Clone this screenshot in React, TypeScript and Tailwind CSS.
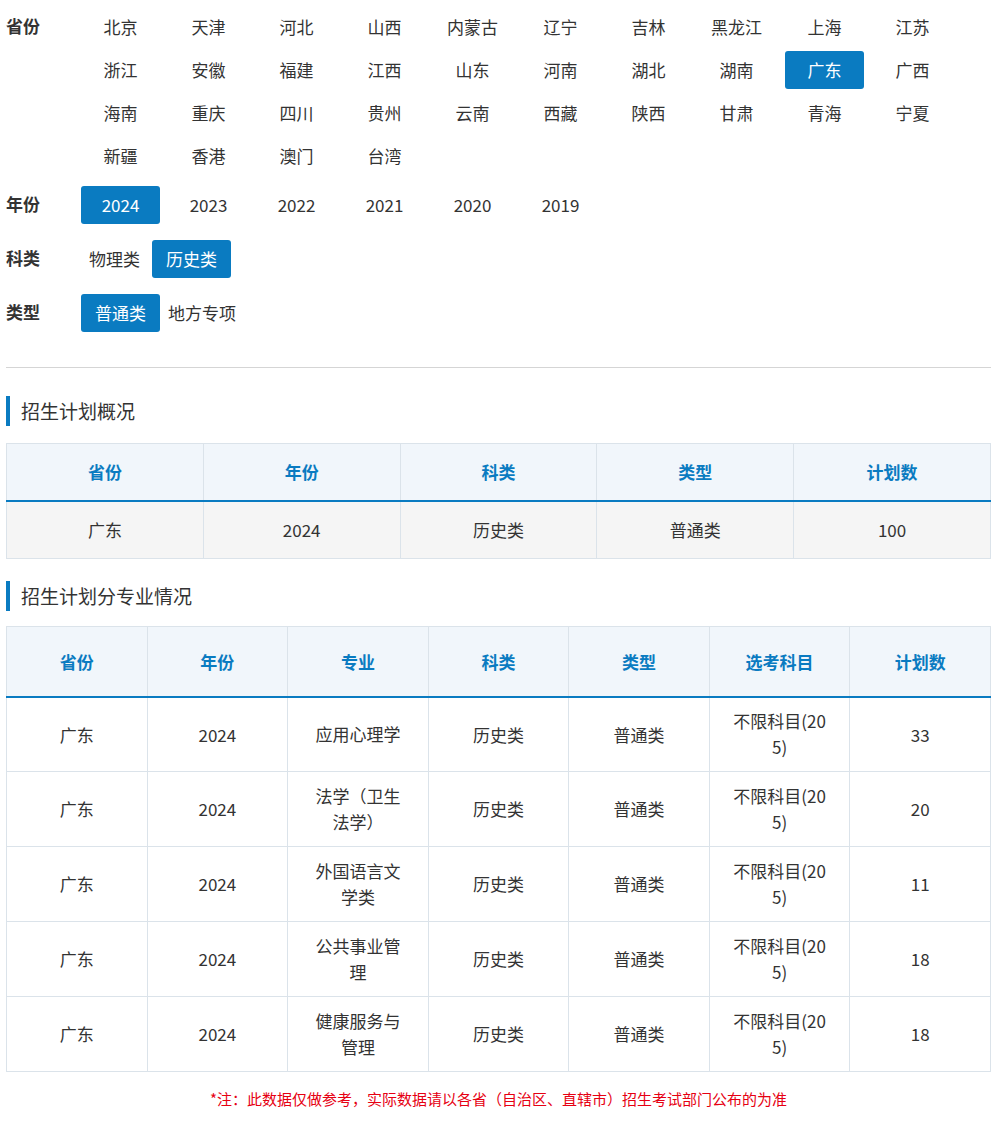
import React from "react";

const provinces = ["北京","天津","河北","山西","内蒙古","辽宁","吉林","黑龙江","上海","江苏","浙江","安徽","福建","江西","山东","河南","湖北","湖南","广东","广西","海南","重庆","四川","贵州","云南","西藏","陕西","甘肃","青海","宁夏","新疆","香港","澳门","台湾"];
const years = ["2024","2023","2022","2021","2020","2019"];
const rows = [
  ["应用心理学","33"],
  ["法学（卫生法学）","20"],
  ["外国语言文学类","11"],
  ["公共事业管理","18"],
  ["健康服务与管理","18"],
];

function Opt({ t, active }: { t: string; active?: boolean }) {
  return (
    <div className={`h-[38px] w-[79px] mr-[9px] flex items-center justify-center rounded-[3px] text-[17px] ${active ? "bg-[#0a7bc1] text-white" : "text-[#333]"}`}>{t}</div>
  );
}

function Label({ t }: { t: string }) {
  return <div className="w-[75px] shrink-0 font-bold text-[17px] text-[#333] pt-[5px]">{t}</div>;
}

function Title({ t }: { t: string }) {
  return (
    <div className="flex items-center h-[30px]">
      <div className="w-[4px] h-[30px] bg-[#0a7bc1]" />
      <div className="ml-[11px] text-[19px] text-[#333]">{t}</div>
    </div>
  );
}

export default function App() {
  return (
    <div className="w-[997px] bg-white px-[6px] pt-[8px] pb-[10px] text-[#333]" style={{ fontFamily: '"Noto Sans CJK SC", "Noto Sans", sans-serif' }}>
      <div className="flex">
        <Label t="省份" />
        <div className="flex flex-wrap w-[890px] gap-y-[5px]">
          {provinces.map((p) => <Opt key={p} t={p} active={p === "广东"} />)}
        </div>
      </div>
      <div className="flex mt-[11px]">
        <Label t="年份" />
        <div className="flex">{years.map((y) => <Opt key={y} t={y} active={y === "2024"} />)}</div>
      </div>
      <div className="flex mt-[16px]">
        <Label t="科类" />
        <div className="flex gap-[4px]">
          <div className="h-[38px] px-[8px] flex items-center text-[17px] text-[#333]">物理类</div>
          <div className="h-[38px] w-[79px] flex items-center justify-center rounded-[3px] text-[17px] bg-[#0a7bc1] text-white">历史类</div>
        </div>
      </div>
      <div className="flex mt-[16px]">
        <Label t="类型" />
        <div className="flex gap-[8px]">
          <div className="h-[38px] w-[79px] flex items-center justify-center rounded-[3px] text-[17px] bg-[#0a7bc1] text-white">普通类</div>
          <div className="h-[38px] flex items-center text-[17px] text-[#333]">地方专项</div>
        </div>
      </div>
      <div className="h-px bg-[#d5d5d5] mt-[35px] mb-[28px]" />
      <Title t="招生计划概况" />
      <table className="w-full mt-[17px] border-collapse table-fixed text-[17px]">
        <thead>
          <tr className="bg-[#f1f6fb] h-[57px]">
            {["省份","年份","科类","类型","计划数"].map((h) => (
              <th key={h} className="border border-[#dbe3ea] border-b-2 border-b-[#0a7bc1] text-[#0a7bc1] font-bold">{h}</th>
            ))}
          </tr>
        </thead>
        <tbody>
          <tr className="bg-[#f5f5f5] h-[58px]">
            {["广东","2024","历史类","普通类","100"].map((c, i) => (
              <td key={i} className="border border-[#dbe3ea] text-center">{c}</td>
            ))}
          </tr>
        </tbody>
      </table>
      <div className="mt-[22px]"><Title t="招生计划分专业情况" /></div>
      <table className="w-full mt-[15px] border-collapse table-fixed text-[17px]">
        <thead>
          <tr className="bg-[#f1f6fb] h-[70px]">
            {["省份","年份","专业","科类","类型","选考科目","计划数"].map((h) => (
              <th key={h} className="border border-[#dbe3ea] border-b-2 border-b-[#0a7bc1] text-[#0a7bc1] font-bold">{h}</th>
            ))}
          </tr>
        </thead>
        <tbody>
          {rows.map(([m, n], i) => (
            <tr key={i} className="h-[75px]">
              <td className="border border-[#dbe3ea] text-center">广东</td>
              <td className="border border-[#dbe3ea] text-center">2024</td>
              <td className="border border-[#dbe3ea] text-center px-[22px] leading-[26px] break-all">{m}</td>
              <td className="border border-[#dbe3ea] text-center">历史类</td>
              <td className="border border-[#dbe3ea] text-center">普通类</td>
              <td className="border border-[#dbe3ea] text-center px-[18px] leading-[26px] break-all">不限科目(205)</td>
              <td className="border border-[#dbe3ea] text-center">{n}</td>
            </tr>
          ))}
        </tbody>
      </table>
      <div className="text-center text-[15px] text-[#e60012] mt-[16px]">*注：此数据仅做参考，实际数据请以各省（自治区、直辖市）招生考试部门公布的为准</div>
    </div>
  );
}
